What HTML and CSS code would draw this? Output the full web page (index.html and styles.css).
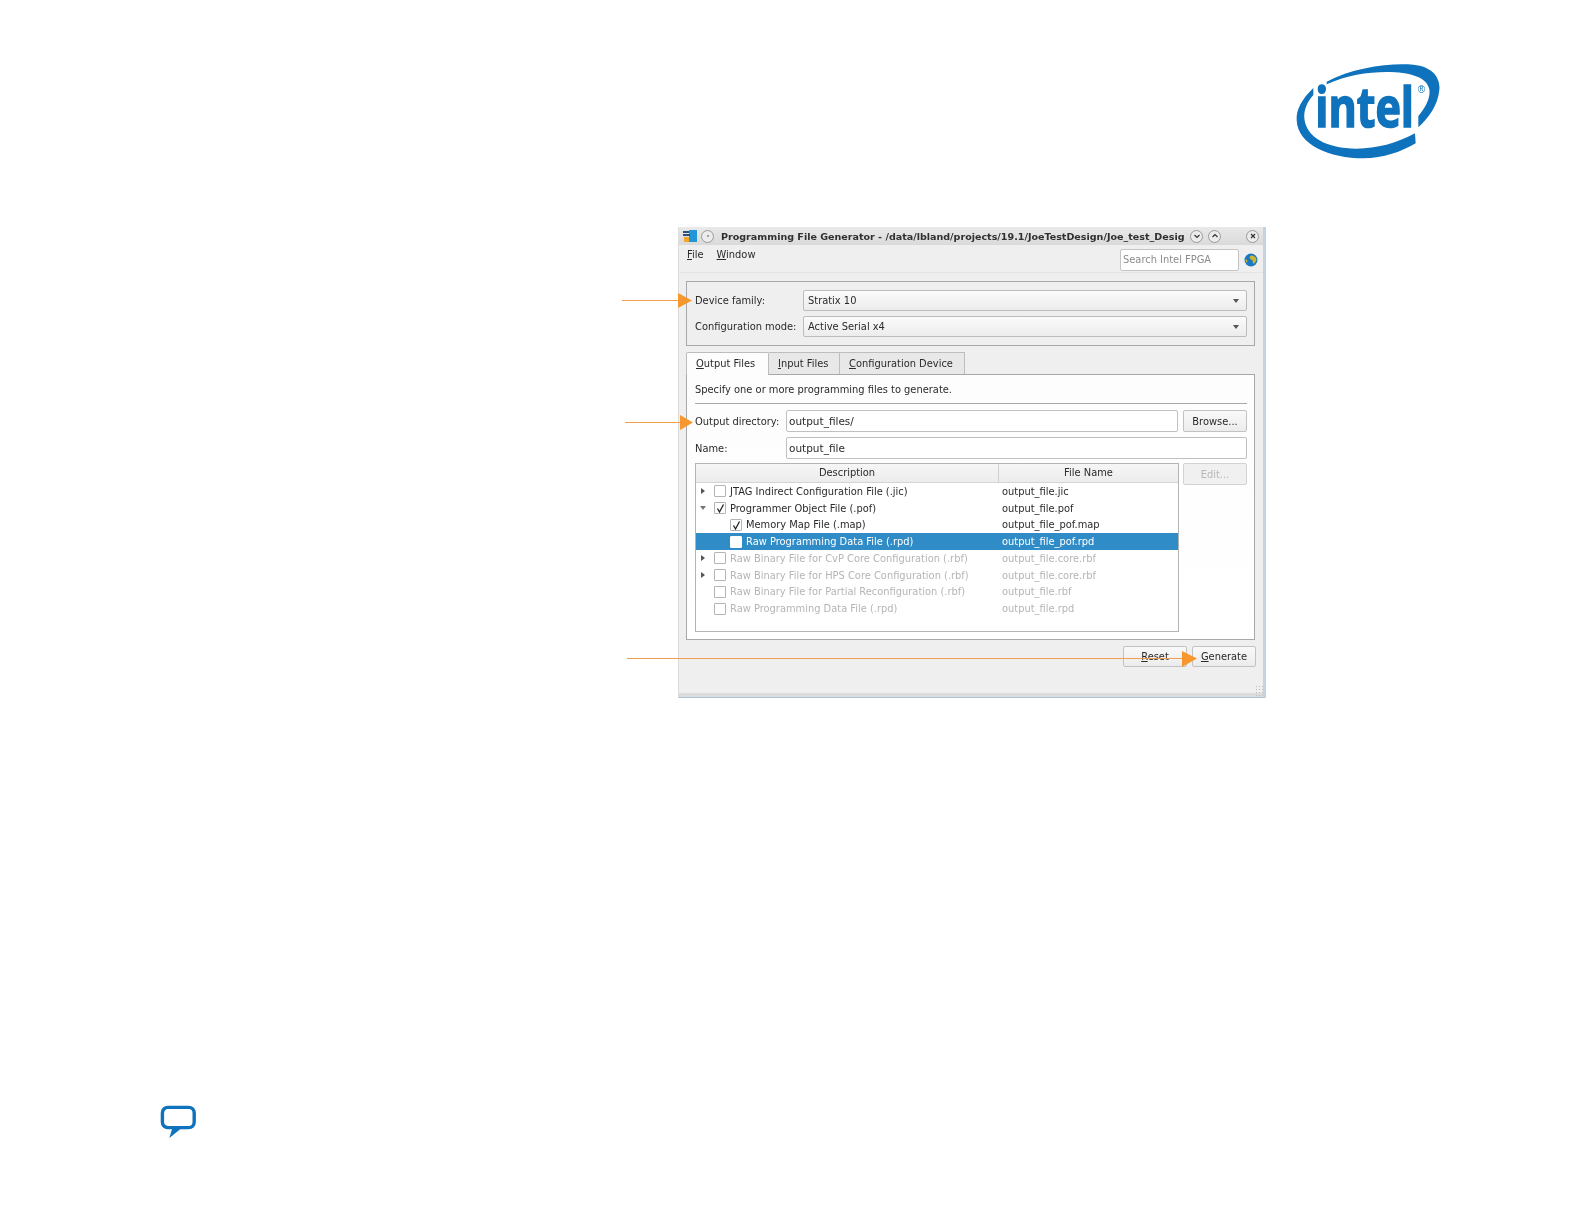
FILE: index.html
```html
<!DOCTYPE html>
<html lang="en">
<head>
<meta charset="utf-8">
<title>Programming File Generator</title>
<link rel="stylesheet" href="styles.css">
</head>
<body>
<div class="page">
  <header class="brand">
    <svg class="logo" viewBox="0 0 510 360" width="170" height="120">
      <path class="logo-ink" d="M140 95C220 52 330 38 400 44C460 50 482 85 478 120C474 165 445 205 415 232L415 198C436 172 452 145 448 118C442 82 390 66 320 66C260 66 200 76 140 103Z"/>
      <path class="logo-ink" d="M100 114C65 148 48 180 50 210C52 285 150 325 250 325C310 325 365 305 407 280L405 250C350 280 290 296 230 296C140 296 78 262 73 205C71 180 82 155 100 135Z"/>
      <text class="logo-word" x="106" y="232" textLength="296" lengthAdjust="spacingAndGlyphs">intel</text>
      <text class="logo-reg" x="413" y="128">®</text>
    </svg>
  </header>

  <main class="figure">
    <div class="window">
      <div class="titlebar">
        <svg class="app-icon" viewBox="0 0 14 14" width="14" height="14">
          <rect x="6" y="1" width="8" height="12" fill="#2196d8"/>
          <rect x="0" y="2" width="6" height="2" fill="#2a4f80"/>
          <rect x="0" y="5" width="7" height="2" fill="#2a4f80"/>
          <rect x="1" y="8" width="5" height="5" fill="#f5a52a"/>
        </svg>
        <span class="wm-btn wm-btn-menu"><span class="wm-dot"></span></span>
        <span class="title-text">Programming File Generator - /data/lbland/projects/19.1/JoeTestDesign/Joe_test_Desig</span>
        <span class="wm-btn wm-btn-down"><svg viewBox="0 0 12 12" width="12" height="12"><path class="wm-glyph" d="M3.500 5L6 7.500L8.500 5"/></svg></span>
        <span class="wm-btn wm-btn-up"><svg viewBox="0 0 12 12" width="12" height="12"><path class="wm-glyph" d="M3.500 7L6 4.500L8.500 7"/></svg></span>
        <span class="wm-btn wm-btn-close"><svg viewBox="0 0 12 12" width="12" height="12"><path class="wm-glyph" d="M4 4L8 8M8 4L4 8"/></svg></span>
      </div>

      <div class="menubar">
        <span class="menu-item"><u>F</u>ile</span>
        <span class="menu-item"><u>W</u>indow</span>
        <span class="search">Search Intel FPGA</span>
        <svg class="globe" viewBox="0 0 14 14" width="14" height="14">
          <circle cx="7" cy="7" r="6.500" fill="#1a78c2"/>
          <path d="M7 2.500C9 2 11.500 3.500 12.500 6C12.500 8 11 10 9.500 11C8.500 9.500 9 8 8 7C6.500 6.500 5.500 5 5.500 4C6 3.500 6.500 3 7 2.500Z" fill="#c9b52e"/>
          <path d="M1.500 6C2.500 6 3.500 7 3.500 8.500C3 9.500 2.500 9.500 2 9Z" fill="#c9b52e"/>
        </svg>
      </div>

      <section class="group">
        <div class="group-row">
          <label class="group-label">Device family:</label>
          <div class="combo"><span>Stratix 10</span><i class="combo-caret"></i></div>
        </div>
        <div class="group-row">
          <label class="group-label">Configuration mode:</label>
          <div class="combo"><span>Active Serial x4</span><i class="combo-caret"></i></div>
        </div>
      </section>

      <nav class="tabs">
        <span class="tab tab-active"><u>O</u>utput Files</span>
        <span class="tab tab-input"><u>I</u>nput Files</span>
        <span class="tab tab-config"><u>C</u>onfiguration Device</span>
      </nav>

      <section class="panel">
        <p class="intro">Specify one or more programming files to generate.</p>
        <div class="form-row">
          <label class="form-label">Output directory:</label>
          <div class="field field-short">output_files/</div>
          <button class="btn btn-side">Browse...</button>
        </div>
        <div class="form-row">
          <label class="form-label">Name:</label>
          <div class="field">output_file</div>
        </div>
        <div class="table-row">
          <div class="table">
            <div class="thead">
              <span class="th th-desc">Description</span>
              <span class="th th-file">File Name</span>
            </div>
            <div class="tr"><span class="td-desc"><i class="exp exp-right"></i><i class="check"></i><span>JTAG Indirect Configuration File (.jic)</span></span><span class="td-file">output_file.jic</span></div>
            <div class="tr"><span class="td-desc"><i class="exp exp-down"></i><i class="check"><svg viewBox="0 0 11 11" width="11" height="11"><path class="tick" d="M2.500 5.500L4.500 9L8.500 1.500"/></svg></i><span>Programmer Object File (.pof)</span></span><span class="td-file">output_file.pof</span></div>
            <div class="tr tr-child"><span class="td-desc"><i class="check"><svg viewBox="0 0 11 11" width="11" height="11"><path class="tick" d="M2.500 5.500L4.500 9L8.500 1.500"/></svg></i><span>Memory Map File (.map)</span></span><span class="td-file">output_file_pof.map</span></div>
            <div class="tr tr-child tr-selected"><span class="td-desc"><i class="check check-white"></i><span>Raw Programming Data File (.rpd)</span></span><span class="td-file">output_file_pof.rpd</span></div>
            <div class="tr tr-off"><span class="td-desc"><i class="exp exp-right"></i><i class="check"></i><span>Raw Binary File for CvP Core Configuration (.rbf)</span></span><span class="td-file">output_file.core.rbf</span></div>
            <div class="tr tr-off"><span class="td-desc"><i class="exp exp-right"></i><i class="check"></i><span>Raw Binary File for HPS Core Configuration (.rbf)</span></span><span class="td-file">output_file.core.rbf</span></div>
            <div class="tr tr-off tr-leaf"><span class="td-desc"><i class="check"></i><span>Raw Binary File for Partial Reconfiguration (.rbf)</span></span><span class="td-file">output_file.rbf</span></div>
            <div class="tr tr-off tr-leaf"><span class="td-desc"><i class="check"></i><span>Raw Programming Data File (.rpd)</span></span><span class="td-file">output_file.rpd</span></div>
          </div>
          <button class="btn btn-side btn-disabled">Edit...</button>
        </div>
      </section>

      <div class="actions">
        <button class="btn btn-action"><u>R</u>eset</button>
        <button class="btn btn-action"><u>G</u>enerate</button>
      </div>
      <i class="grip"></i>
    </div>

    <svg class="callouts" viewBox="0 0 1584 471" width="1584" height="471">
      <path class="callout-line" d="M622 73.500H680"/>
      <path class="callout-head" d="M678 66L692 73.500L678 81Z"/>
      <path class="callout-line" d="M625 195.500H682"/>
      <path class="callout-head" d="M680 188L693 195.500L680 203Z"/>
      <path class="callout-line" d="M627 431.500H1184"/>
      <path class="callout-head" d="M1182 424L1197 431.500L1182 440Z"/>
    </svg>
  </main>

  <footer class="feedback">
    <svg viewBox="0 0 40 36" width="40" height="36">
      <path class="bubble-tail" d="M14.700 23L11.300 34L25 23Z"/>
      <path class="bubble" d="M10 3.400H30.500C34 3.400 36.200 5.600 36.200 9V18C36.200 21.400 34 23.600 30.500 23.600H10C6.600 23.600 4.400 21.400 4.400 18V9C4.400 5.600 6.600 3.400 10 3.400Z"/>
    </svg>
  </footer>
</div>
</body>
</html>
```

FILE: styles.css
```css
* { box-sizing: border-box; }
html, body { margin: 0; padding: 0; background: #fff; }
.page { width: 1584px; height: 1224px; overflow: hidden; }

/* brand */
.brand { display: flex; justify-content: flex-end; padding: 50px 134px 0 0; height: 227px; }
.logo { display: block; height: 120px; filter: blur(0.4px); }
.logo-ink { fill: #0f72bc; }
.logo-word { font-family: "Open Sans", sans-serif; font-weight: 700; font-size: 166px; fill: #0f72bc; stroke: #0f72bc; stroke-width: 5px; }
.logo-reg { font-family: "Liberation Sans", sans-serif; font-size: 30px; fill: #0f72bc; }

/* figure */
.figure { position: relative; height: 471px; padding-left: 678px; }
.callouts { position: absolute; left: 0; top: 0; pointer-events: none; }
.callout-line { fill: none; stroke: #f0a050; stroke-width: 1; }
.callout-head { fill: #f7982f; }

/* window */
.window {
  position: relative;
  width: 588px; height: 471px;
  background: #efefef;
  border-right: 3px solid #c4d3e0;
  border-bottom: 1px solid #a9c4d8;
  border-left: 1px solid #dcdcdc;
  box-shadow: inset 0 -4px 0 #dcdcdc;
  padding: 0 8px 0 7px;
  font-family: "DejaVu Sans", sans-serif;
  font-size: 9.9px;
  color: #2a2a2a;
  display: flex; flex-direction: column;
  filter: blur(0.35px);
}
.titlebar {
  display: flex; align-items: center; height: 18px;
  margin: 0 -8px 0 -7px; padding: 0 4px 0 4px;
  background: linear-gradient(#e9e9e9, #dadada);
}
.app-icon { flex: none; }
.wm-btn {
  flex: none; width: 13px; height: 13px; border-radius: 50%;
  border: 1px solid #9a9a9a; background: #ececec;
  display: flex; align-items: center; justify-content: center;
}
.wm-btn svg { flex: none; display: block; margin: -1px; }
.wm-glyph { fill: none; stroke: #333; stroke-width: 1.2; }
.wm-dot { width: 2px; height: 2px; border-radius: 50%; background: #888; }
.wm-btn-menu { margin-left: 4px; }
.title-text { flex: none; width: 464px; margin-left: 7px; font-weight: 700; font-size: 9.55px; white-space: nowrap; color: #303030; }
.wm-btn-down { margin-left: 5px; }
.wm-btn-up { margin-left: 5px; }
.wm-btn-close { margin-left: 25px; }

.menubar {
  display: flex; align-items: center; height: 28px;
  margin: 0 -8px 0 -7px; padding: 2px 5px 0 8px;
  border-bottom: 1px solid #e4e4e4;
}
.menu-item { margin: 0 13px 10px 0; }
.search {
  margin-left: auto; width: 119px; height: 22px; line-height: 20px;
  padding-left: 2px; background: #fff; border: 1px solid #c4c4c4; border-radius: 2px;
  color: #8c8c8c; white-space: nowrap; overflow: hidden;
}
.globe { flex: none; margin-left: 5px; }

/* group box */
.group {
  margin-top: 8px; height: 65px; padding: 8px 7px 0 8px;
  border: 1px solid #a8a8a8; display: flex; flex-direction: column; gap: 5px;
}
.group-row { display: flex; align-items: center; height: 21px; }
.group-label { flex: none; width: 108px; white-space: nowrap; }
.combo {
  flex: 1; height: 21px; display: flex; align-items: center; justify-content: space-between;
  padding: 0 7px 0 4px; border: 1px solid #bcbcbc; border-radius: 2px;
  background: linear-gradient(#fbfbfb, #ececec);
}
.combo-caret { width: 0; height: 0; border-left: 3px solid transparent; border-right: 3px solid transparent; border-top: 4px solid #555; }

/* tabs */
.tabs { display: flex; margin-top: 6px; height: 23px; align-items: flex-end; position: relative; z-index: 1; margin-bottom: -1px; }
.tab {
  height: 22px; line-height: 21px; padding-left: 9px; margin-bottom: 1px;
  border: 1px solid #bdbdbd; border-left: 0; border-bottom: 0; background: #e8e8e8; white-space: nowrap;
}
.tab-active { width: 83px; height: 23px; line-height: 21px; margin-bottom: 0; background: #fdfdfd; border-left: 1px solid #bdbdbd; border-radius: 2px 2px 0 0; }
.tab-input { width: 71px; }
.tab-config { width: 125px; }

/* panel */
.panel {
  height: 266px; padding: 0 7px 0 8px;
  border: 1px solid #a8a8a8;
  background: linear-gradient(#fdfdfd, #fff);
  display: flex; flex-direction: column;
}
.intro { margin: 0 0 6px; padding-top: 1px; height: 29px; line-height: 28px; border-bottom: 1px solid #a8a8a8; white-space: nowrap; }
.form-row { display: flex; align-items: center; height: 22px; margin-bottom: 5px; }
.form-label { flex: none; width: 91px; white-space: nowrap; }
.field {
  flex: 1; height: 22px; line-height: 20px; padding-left: 2px;
  background: #fff; border: 1px solid #c0c0c0; border-radius: 2px; font-size: 10.5px;
}
.field-short { margin-right: 5px; }
.btn {
  font: inherit; color: inherit; padding: 0; margin: 0;
  border: 1px solid #c2c2c2; border-radius: 2px;
  background: linear-gradient(#f9f9f9, #ececec);
}
.btn-side { flex: none; width: 64px; height: 22px; }
.btn-disabled { color: #b8b8b8; background: #f0f0f0; border-color: #d2d2d2; align-self: flex-start; }
.table-row { display: flex; gap: 4px; margin-top: -1px; }
.table { width: 484px; height: 169px; border: 1px solid #b4b4b4; background: #fff; }
.thead { display: flex; height: 19px; background: linear-gradient(#f6f6f6, #ececec); border-bottom: 1px solid #d4d4d4; }
.th { line-height: 18px; text-align: center; }
.th-desc { width: 303px; border-right: 1px solid #d0d0d0; }
.th-file { flex: 1; }
.tr { display: flex; align-items: center; height: 16.75px; white-space: nowrap; }
.td-desc { width: 303px; display: flex; align-items: center; padding-left: 4px; }
.td-file { padding-left: 3px; }
.tr-child .td-desc { padding-left: 34px; }
.tr-leaf .td-desc { padding-left: 18px; }
.tr-selected { background: #308cc6; color: #fff; }
.tr-off { color: #b5b5b5; }
.exp { flex: none; width: 14px; display: flex; align-items: center; }
.exp::before { content: ""; width: 0; height: 0; }
.exp-right::before { border-top: 3px solid transparent; border-bottom: 3px solid transparent; border-left: 4px solid #555; margin-left: 1px; }
.exp-down::before { border-left: 3px solid transparent; border-right: 3px solid transparent; border-top: 4px solid #777; }
.check { flex: none; width: 12px; height: 12px; margin-right: 4px; border: 1px solid #b4b4b4; border-radius: 1px; background: #fff; display: block; }
.check svg { display: block; }
.check-white { border-color: #fff; }
.tick { fill: none; stroke: #222; stroke-width: 1.3; }

.actions { display: flex; justify-content: flex-end; gap: 5px; margin: 6px -1px 0 0; }
.btn-action { width: 64px; height: 21px; }

.grip {
  position: absolute; right: 0; bottom: 0; width: 8px; height: 12px;
  background-image: radial-gradient(circle, #bdbdbd 0.7px, transparent 1px);
  background-size: 3px 3px;
}

/* footer */
.feedback { padding: 406px 0 0 158px; }
.feedback svg { display: block; }
.bubble { fill: #fff; stroke: #0f72bc; stroke-width: 3.4; stroke-linejoin: round; }
.bubble-tail { fill: #0f72bc; }
```
